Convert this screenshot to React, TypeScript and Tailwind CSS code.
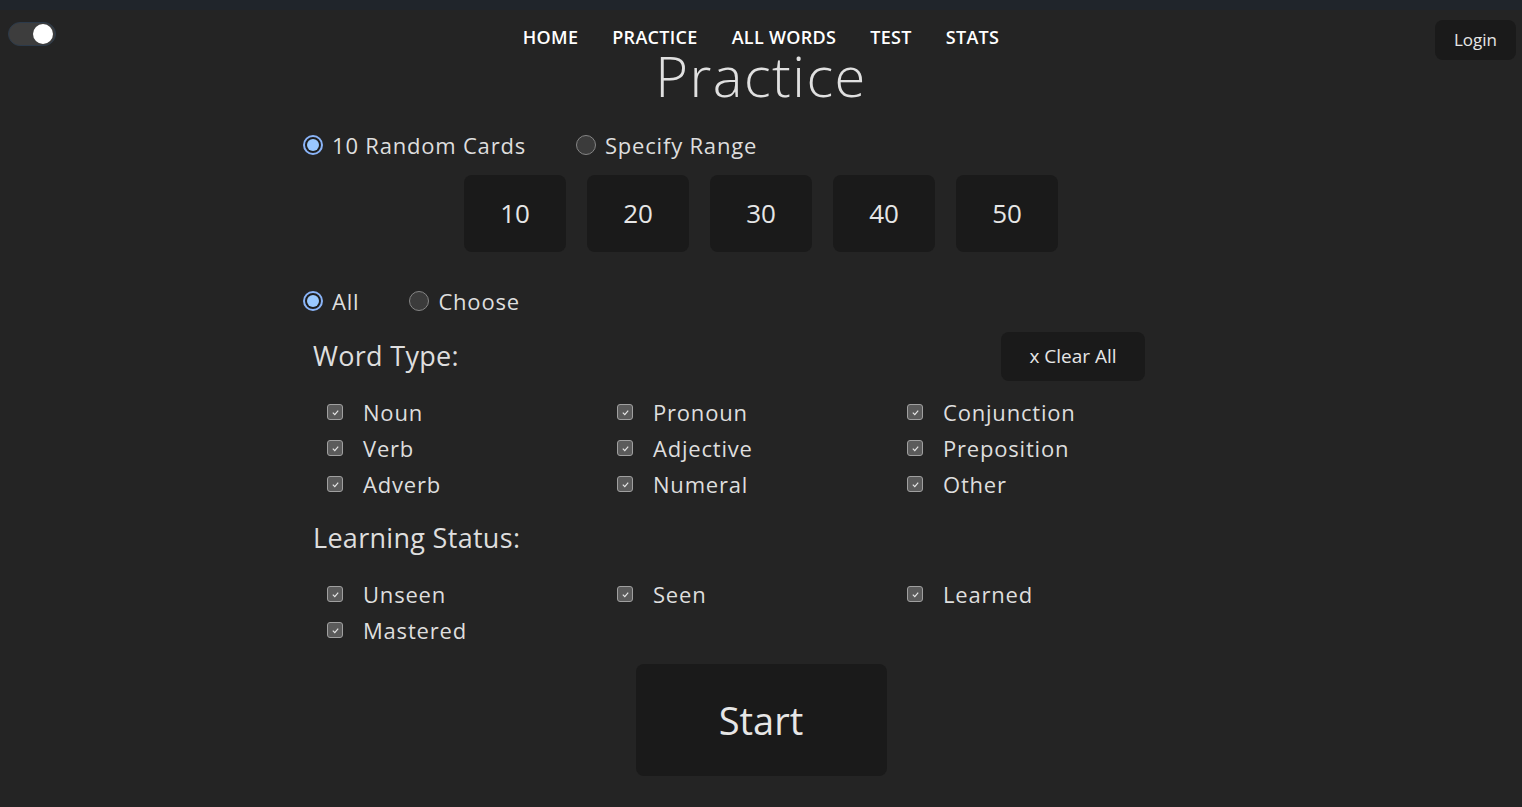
import { useState } from "react";

const FONT = "font-['Open_Sans','Lato',sans-serif]";

const NAV = ["HOME", "PRACTICE", "ALL WORDS", "TEST", "STATS"];
const COUNTS = [10, 20, 30, 40, 50];
const WORD_TYPES = ["Noun", "Pronoun", "Conjunction", "Verb", "Adjective", "Preposition", "Adverb", "Numeral", "Other"];
const STATUSES = ["Unseen", "Seen", "Learned", "Mastered"];

const Radio = ({ checked, label, onClick }: { checked: boolean; label: string; onClick: () => void }) => (
  <button type="button" onClick={onClick} className="flex items-center gap-[9px] h-[30px]">
    {checked ? (
      <span className="w-5 h-5 rounded-full border-2 border-[#8ab4f8] bg-[#1e1e1e] flex items-center justify-center">
        <span className="w-[12px] h-[12px] rounded-full bg-[#99c8ff]" />
      </span>
    ) : (
      <span className="w-5 h-5 rounded-full border border-[#858585] bg-[#3b3b3b]" />
    )}
    <span className="text-[22px] tracking-[0.8px] text-[#dedede]">{label}</span>
  </button>
);

const Check = ({ label }: { label: string }) => (
  <div className="flex items-center h-9">
    <span className="w-4 h-4 rounded-[3px] border border-[#a0a0a0] bg-[#5b5b5b] flex items-center justify-center">
      <svg viewBox="0 0 10 10" className="w-[9px] h-[9px]">
        <path d="M2 5.2 L4.2 7.3 L8 2.8" fill="none" stroke="#e6e6e6" strokeWidth="1.3" />
      </svg>
    </span>
    <span className="ml-5 text-[22px] tracking-[0.8px] text-[#dedede]">{label}</span>
  </div>
);

export default function App() {
  const [mode, setMode] = useState("random");
  const [types, setTypes] = useState("all");

  return (
    <div className={`min-h-screen bg-[#242424] text-[#dedede] ${FONT}`}>
      <div className="h-[10px] bg-[#20252b]" />

      <header className="grid grid-cols-[1fr_auto_1fr] h-[50px] items-start">
        <div className="mt-[12px] ml-[8px] w-12 h-6 rounded-full bg-[#3d3d3d] border border-[#2c3a4a] flex items-center justify-end pr-[2px]">
          <span className="w-5 h-5 rounded-full bg-white" />
        </div>
        <nav className="mt-[18px] flex gap-[34px] text-[18px] font-semibold leading-[18px] text-white">
          {NAV.map((n) => (
            <a key={n} href="#" className="tracking-[0.3px]">{n}</a>
          ))}
        </nav>
        <div className="flex justify-end">
          <button className="mt-[10px] mr-[6px] h-10 w-[81px] rounded-lg bg-[#1a1a1a] text-[17px] text-[#e6e6e6]">
            Login
          </button>
        </div>
      </header>

      <h1 className="-mt-[13px] h-[56px] leading-[56px] text-center text-[56px] font-light tracking-[1.5px] text-[#e0e0e0]">Practice</h1>

      <main className="w-[916px] mx-auto mt-[27px]">
        <div className="flex gap-[50px]">
          <Radio checked={mode === "random"} label="10 Random Cards" onClick={() => setMode("random")} />
          <Radio checked={mode === "range"} label="Specify Range" onClick={() => setMode("range")} />
        </div>

        <div className="mt-[15px] flex justify-center gap-[21px]">
          {COUNTS.map((c) => (
            <button key={c} className="w-[102px] h-[77px] rounded-lg bg-[#1a1a1a] text-[26px] font-medium text-[#e6e6e6]">
              {c}
            </button>
          ))}
        </div>

        <div className="mt-[34px] flex gap-[50px]">
          <Radio checked={types === "all"} label="All" onClick={() => setTypes("all")} />
          <Radio checked={types === "choose"} label="Choose" onClick={() => setTypes("choose")} />
        </div>

        <div className="mt-[16px] ml-[10px] w-[832px] h-[49px] flex items-center justify-between">
          <h2 className="text-[27px] tracking-[0.3px]">Word Type:</h2>
          <button className="h-[49px] w-[144px] rounded-lg bg-[#1a1a1a] text-[19px] text-[#e6e6e6]">x Clear All</button>
        </div>

        <div className="mt-[13px] ml-[24px] grid grid-cols-[290px_290px_290px]">
          {WORD_TYPES.map((t) => <Check key={t} label={t} />)}
        </div>

        <h2 className="mt-[21px] ml-[10px] h-[30px] leading-[30px] text-[27px] tracking-[0.3px]">Learning Status:</h2>

        <div className="mt-[23px] ml-[24px] grid grid-cols-[290px_290px_290px]">
          {STATUSES.map((s) => <Check key={s} label={s} />)}
        </div>

        <div className="mt-[16px] flex justify-center">
          <button className="w-[251px] h-[112px] rounded-lg bg-[#1a1a1a] text-[38px] text-[#e6e6e6]">Start</button>
        </div>
      </main>
    </div>
  );
}
